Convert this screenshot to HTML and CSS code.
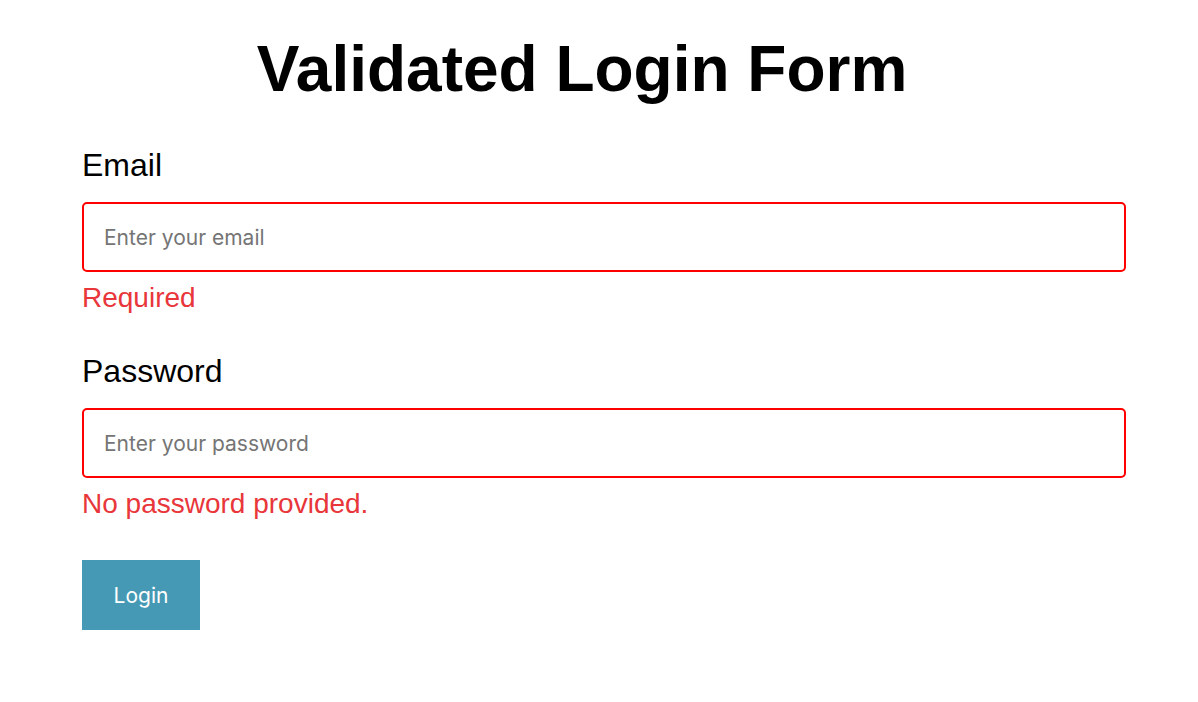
FILE: index.html
```html
<!DOCTYPE html>
<html>
<head>
<meta charset="utf-8">
<link rel="stylesheet" href="styles.css">
</head>
<body>
<div class="app">
  <h1 class="title">Validated Login Form</h1>
  <form class="form">
    <div class="field">
      <label class="label" for="email">Email</label>
      <input class="input error" id="email" type="text" placeholder="Enter your email">
      <div class="message">Required</div>
    </div>
    <div class="field">
      <label class="label" for="password">Password</label>
      <input class="input error" id="password" type="password" placeholder="Enter your password">
      <div class="message">No password provided.</div>
    </div>
    <button class="button" type="button">Login</button>
  </form>
</div>
</body>
</html>
```
FILE: styles.css
```css
html, body {
  margin: 0;
  padding: 0;
  background: #fff;
}
.app {
  padding: 0 72px 0 82px;
  font-family: "Liberation Sans", Arial, sans-serif;
}
.title {
  margin: 0;
  padding: 29px 44px 0 0;
  text-align: center;
  font-size: 64px;
  font-weight: bold;
  line-height: 80px;
  color: #000;
}
.form {
  display: flex;
  flex-direction: column;
  align-items: flex-start;
  padding-top: 38px;
}
.field {
  display: flex;
  flex-direction: column;
  width: 100%;
  margin-bottom: 39px;
}
.label {
  font-size: 32px;
  line-height: 36px;
  color: #000;
  margin-bottom: 19px;
}
.input {
  box-sizing: border-box;
  width: 100%;
  height: 70px;
  padding: 0 20px;
  border: 2px solid #ccc;
  border-radius: 5px;
  font-family: Inter, Roboto, sans-serif;
  font-size: 21px;
  outline: none;
}
.input::placeholder {
  color: #757575;
}
.input.error {
  border-color: #ff0000;
}
.message {
  font-size: 28px;
  line-height: 32px;
  color: #e8363a;
  margin-top: 10px;
}
.button {
  width: 118px;
  height: 70px;
  margin-top: 1px;
  border: none;
  background: #4699b4;
  color: #fff;
  font-family: Inter, Roboto, sans-serif;
  font-size: 21px;
  cursor: pointer;
}
```
